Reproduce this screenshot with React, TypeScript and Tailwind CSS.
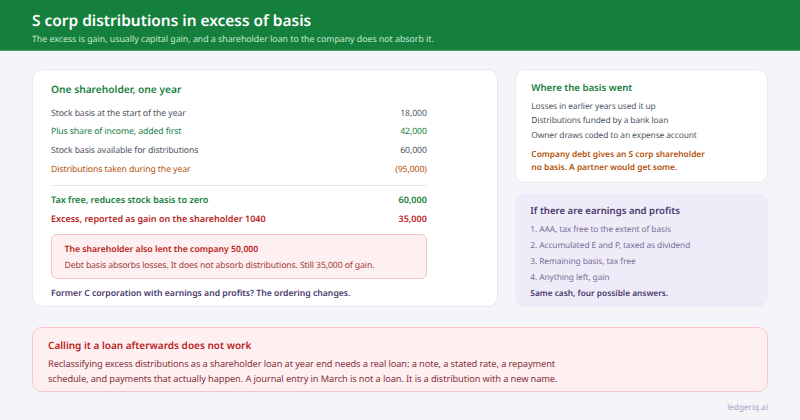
const rows = [
  { label: "Stock basis at the start of the year", value: "18,000", color: "text-[#4b5563]" },
  { label: "Plus share of income, added first", value: "42,000", color: "text-[#15803d]" },
  { label: "Stock basis available for distributions", value: "60,000", color: "text-[#4b5563]" },
  { label: "Distributions taken during the year", value: "(95,000)", color: "text-[#b45309]" },
]

const basisNotes = [
  "Losses in earlier years used it up",
  "Distributions funded by a bank loan",
  "Owner draws coded to an expense account",
]

const ordering = [
  "1. AAA, tax free to the extent of basis",
  "2. Accumulated E and P, taxed as dividend",
  "3. Remaining basis, tax free",
  "4. Anything left, gain",
]

export default function App() {
  return (
    <div className="w-[800px] h-[420px] overflow-hidden flex flex-col bg-[#f4f4f9] font-['Noto_Sans',sans-serif] [text-rendering:geometricPrecision]">
      {/* Header */}
      <div className="h-[51px] shrink-0 bg-[#15803d] border-b border-[#4f9e6d] px-8 pt-[9px]">
        <h1 className="text-[15.45px] leading-[22px] font-semibold text-white">S corp distributions in excess of basis</h1>
        <p className="text-[8.76px] leading-[14px] mt-[1px] text-[#c6e9d2]">
          The excess is gain, usually capital gain, and a shareholder loan to the company does not absorb it.
        </p>
      </div>

      <div className="flex gap-[17px] px-8 pt-[18px]">
        {/* Worked example */}
        <div className="w-[467px] h-[238px] bg-white border border-[#e8e8f2] rounded-[10px] pl-[18px] pr-[70px] pt-[11px]">
          <h2 className="text-[10.2px] leading-[16px] font-semibold text-[#15803d] mb-[7px]">One shareholder, one year</h2>
          {rows.map((r) => (
            <div key={r.label} className={`flex justify-between h-[18.67px] items-center text-[8.7px] tracking-[-0.1px] ${r.color}`}>
              <span>{r.label}</span>
              <span>{r.value}</span>
            </div>
          ))}
          <div className="h-px bg-[#e8e8f2] mt-[6px] mb-[5px]" />
          <div className="flex justify-between h-[18.67px] items-center text-[9px] font-semibold text-[#15803d]">
            <span>Tax free, reduces stock basis to zero</span>
            <span>60,000</span>
          </div>
          <div className="flex justify-between h-[18.67px] items-center text-[9px] font-semibold text-[#b91c1c]">
            <span>Excess, reported as gain on the shareholder 1040</span>
            <span>35,000</span>
          </div>
          <div className="mt-[6px] h-[45px] bg-[#fef0f0] border border-[#f8c4c4] rounded-[6px] px-[12.5px] pt-[7px]">
            <p className="text-[8.67px] leading-[14px] font-semibold text-[#b91c1c]">The shareholder also lent the company 50,000</p>
            <p className="text-[8.7px] tracking-[-0.12px] leading-[14px] mt-[2px] text-[#9f3a3a]">
              Debt basis absorbs losses. It does not absorb distributions. Still 35,000 of gain.
            </p>
          </div>
          <p className="mt-[7px] text-[8.67px] leading-[14px] font-semibold text-[#4a3a6e]">
            Former C corporation with earnings and profits? The ordering changes.
          </p>
        </div>

        <div className="w-[254px] flex flex-col gap-[10px]">
          {/* Where the basis went */}
          <div className="h-[114px] bg-white border border-[#e8e8f2] rounded-[10px] px-[15.5px] pt-[10px]">
            <h2 className="text-[9.6px] leading-[16px] font-semibold text-[#15803d] mb-[3.5px]">Where the basis went</h2>
            {basisNotes.map((n) => (
              <p key={n} className="text-[8.4px] tracking-[-0.1px] leading-[14.67px] text-[#4b5563]">{n}</p>
            ))}
            <p className="mt-[4px] text-[8.35px] leading-[13.3px] font-semibold text-[#b45309]">
              Company debt gives an S corp shareholder
              <br />
              no basis. A partner would get some.
            </p>
          </div>

          {/* Earnings and profits */}
          <div className="h-[114px] bg-[#efecf9] rounded-[10px] px-[15.5px] pt-[10px]">
            <h2 className="text-[9.6px] leading-[16px] font-semibold text-[#4a3a6e] mb-[3px]">If there are earnings and profits</h2>
            {ordering.map((n) => (
              <p key={n} className="text-[8.4px] tracking-[-0.1px] leading-[16px] text-[#7a6d96]">{n}</p>
            ))}
            <p className="text-[8.3px] leading-[16px] font-semibold text-[#4a3a6e]">Same cash, four possible answers.</p>
          </div>
        </div>
      </div>

      {/* Warning */}
      <div className="mx-8 mt-[20px] h-[65px] bg-[#fef0f0] border border-[#f8c4c4] rounded-[10px] px-[15px] pt-[9px]">
        <h2 className="text-[10px] leading-[16px] font-semibold text-[#b91c1c] mb-[3px]">Calling it a loan afterwards does not work</h2>
        <p className="text-[9.25px] tracking-[-0.1px] leading-[15px] text-[#86303a]">
          Reclassifying excess distributions as a shareholder loan at year end needs a real loan: a note, a stated rate, a repayment
          <br />
          schedule, and payments that actually happen. A journal entry in March is not a loan. It is a distribution with a new name.
        </p>
      </div>

      <div className="mx-8 mt-[10px] text-right text-[8.2px] leading-[12px] text-[#a9a3c4]">ledgeriq.ai</div>
    </div>
  )
}
